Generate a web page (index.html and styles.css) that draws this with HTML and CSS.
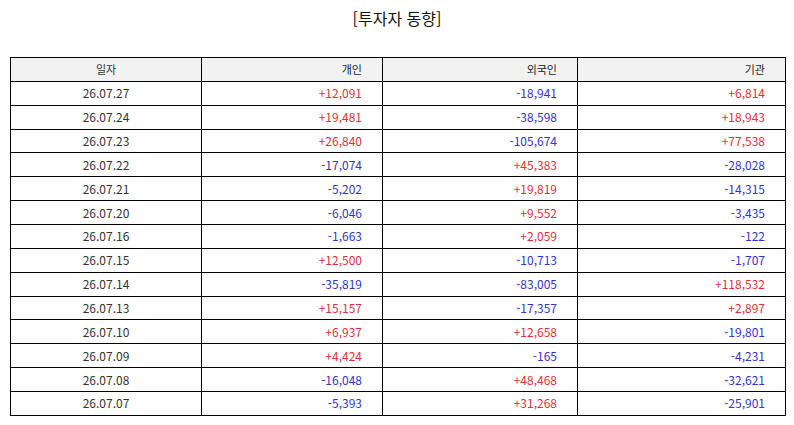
FILE: index.html
```html
<!DOCTYPE html>
<html lang="ko">
<head>
<meta charset="utf-8">
<link rel="stylesheet" href="styles.css">
</head>
<body>
<div class="page">
  <h1 class="title">[투자자 동향]</h1>
  <table class="grid">
    <colgroup>
      <col class="c1"><col class="c2"><col class="c3"><col class="c4">
    </colgroup>
    <thead>
      <tr><th class="date">일자</th><th>개인</th><th>외국인</th><th>기관</th></tr>
    </thead>
    <tbody>
      <tr><td class="date">26.07.27</td><td class="up">+12,091</td><td class="dn">-18,941</td><td class="up">+6,814</td></tr>
      <tr><td class="date">26.07.24</td><td class="up">+19,481</td><td class="dn">-38,598</td><td class="up">+18,943</td></tr>
      <tr><td class="date">26.07.23</td><td class="up">+26,840</td><td class="dn">-105,674</td><td class="up">+77,538</td></tr>
      <tr><td class="date">26.07.22</td><td class="dn">-17,074</td><td class="up">+45,383</td><td class="dn">-28,028</td></tr>
      <tr><td class="date">26.07.21</td><td class="dn">-5,202</td><td class="up">+19,819</td><td class="dn">-14,315</td></tr>
      <tr><td class="date">26.07.20</td><td class="dn">-6,046</td><td class="up">+9,552</td><td class="dn">-3,435</td></tr>
      <tr><td class="date">26.07.16</td><td class="dn">-1,663</td><td class="up">+2,059</td><td class="dn">-122</td></tr>
      <tr><td class="date">26.07.15</td><td class="up">+12,500</td><td class="dn">-10,713</td><td class="dn">-1,707</td></tr>
      <tr><td class="date">26.07.14</td><td class="dn">-35,819</td><td class="dn">-83,005</td><td class="up">+118,532</td></tr>
      <tr><td class="date">26.07.13</td><td class="up">+15,157</td><td class="dn">-17,357</td><td class="up">+2,897</td></tr>
      <tr><td class="date">26.07.10</td><td class="up">+6,937</td><td class="up">+12,658</td><td class="dn">-19,801</td></tr>
      <tr><td class="date">26.07.09</td><td class="up">+4,424</td><td class="dn">-165</td><td class="dn">-4,231</td></tr>
      <tr><td class="date">26.07.08</td><td class="dn">-16,048</td><td class="up">+48,468</td><td class="dn">-32,621</td></tr>
      <tr><td class="date">26.07.07</td><td class="dn">-5,393</td><td class="up">+31,268</td><td class="dn">-25,901</td></tr>
    </tbody>
  </table>
</div>
</body>
</html>
```
FILE: styles.css
```css
html, body {
  margin: 0;
  padding: 0;
  background: #ffffff;
}
.page {
  padding: 0 10px;
  font-family: "Noto Sans CJK KR", "Noto Sans", sans-serif;
  color: #333;
}
.title {
  margin: 0;
  padding-top: 6px;
  height: 57px;
  box-sizing: border-box;
  text-align: center;
  font-size: 16px;
  font-weight: 400;
  line-height: 24px;
  color: #111;
}
.grid {
  width: 775px;
  border-collapse: collapse;
  table-layout: fixed;
  font-size: 12px;
}
.c1 { width: 191px; }
.c2 { width: 181px; }
.c3 { width: 195px; }
.c4 { width: 208px; }
.grid th, .grid td {
  border: 1px solid #000;
  height: 23.87px;
  padding: 0 20px 0 4px;
  text-align: right;
  line-height: 14px;
  box-sizing: border-box;
  vertical-align: middle;
}
.grid th {
  background: #f2f2f2;
  font-weight: 400;
  font-size: 11px;
  color: #222;
}
.grid .date {
  text-align: center;
  padding: 0 4px;
  color: #333;
}
.up { color: #e2303a; }
.dn { color: #3434c8; }
```
